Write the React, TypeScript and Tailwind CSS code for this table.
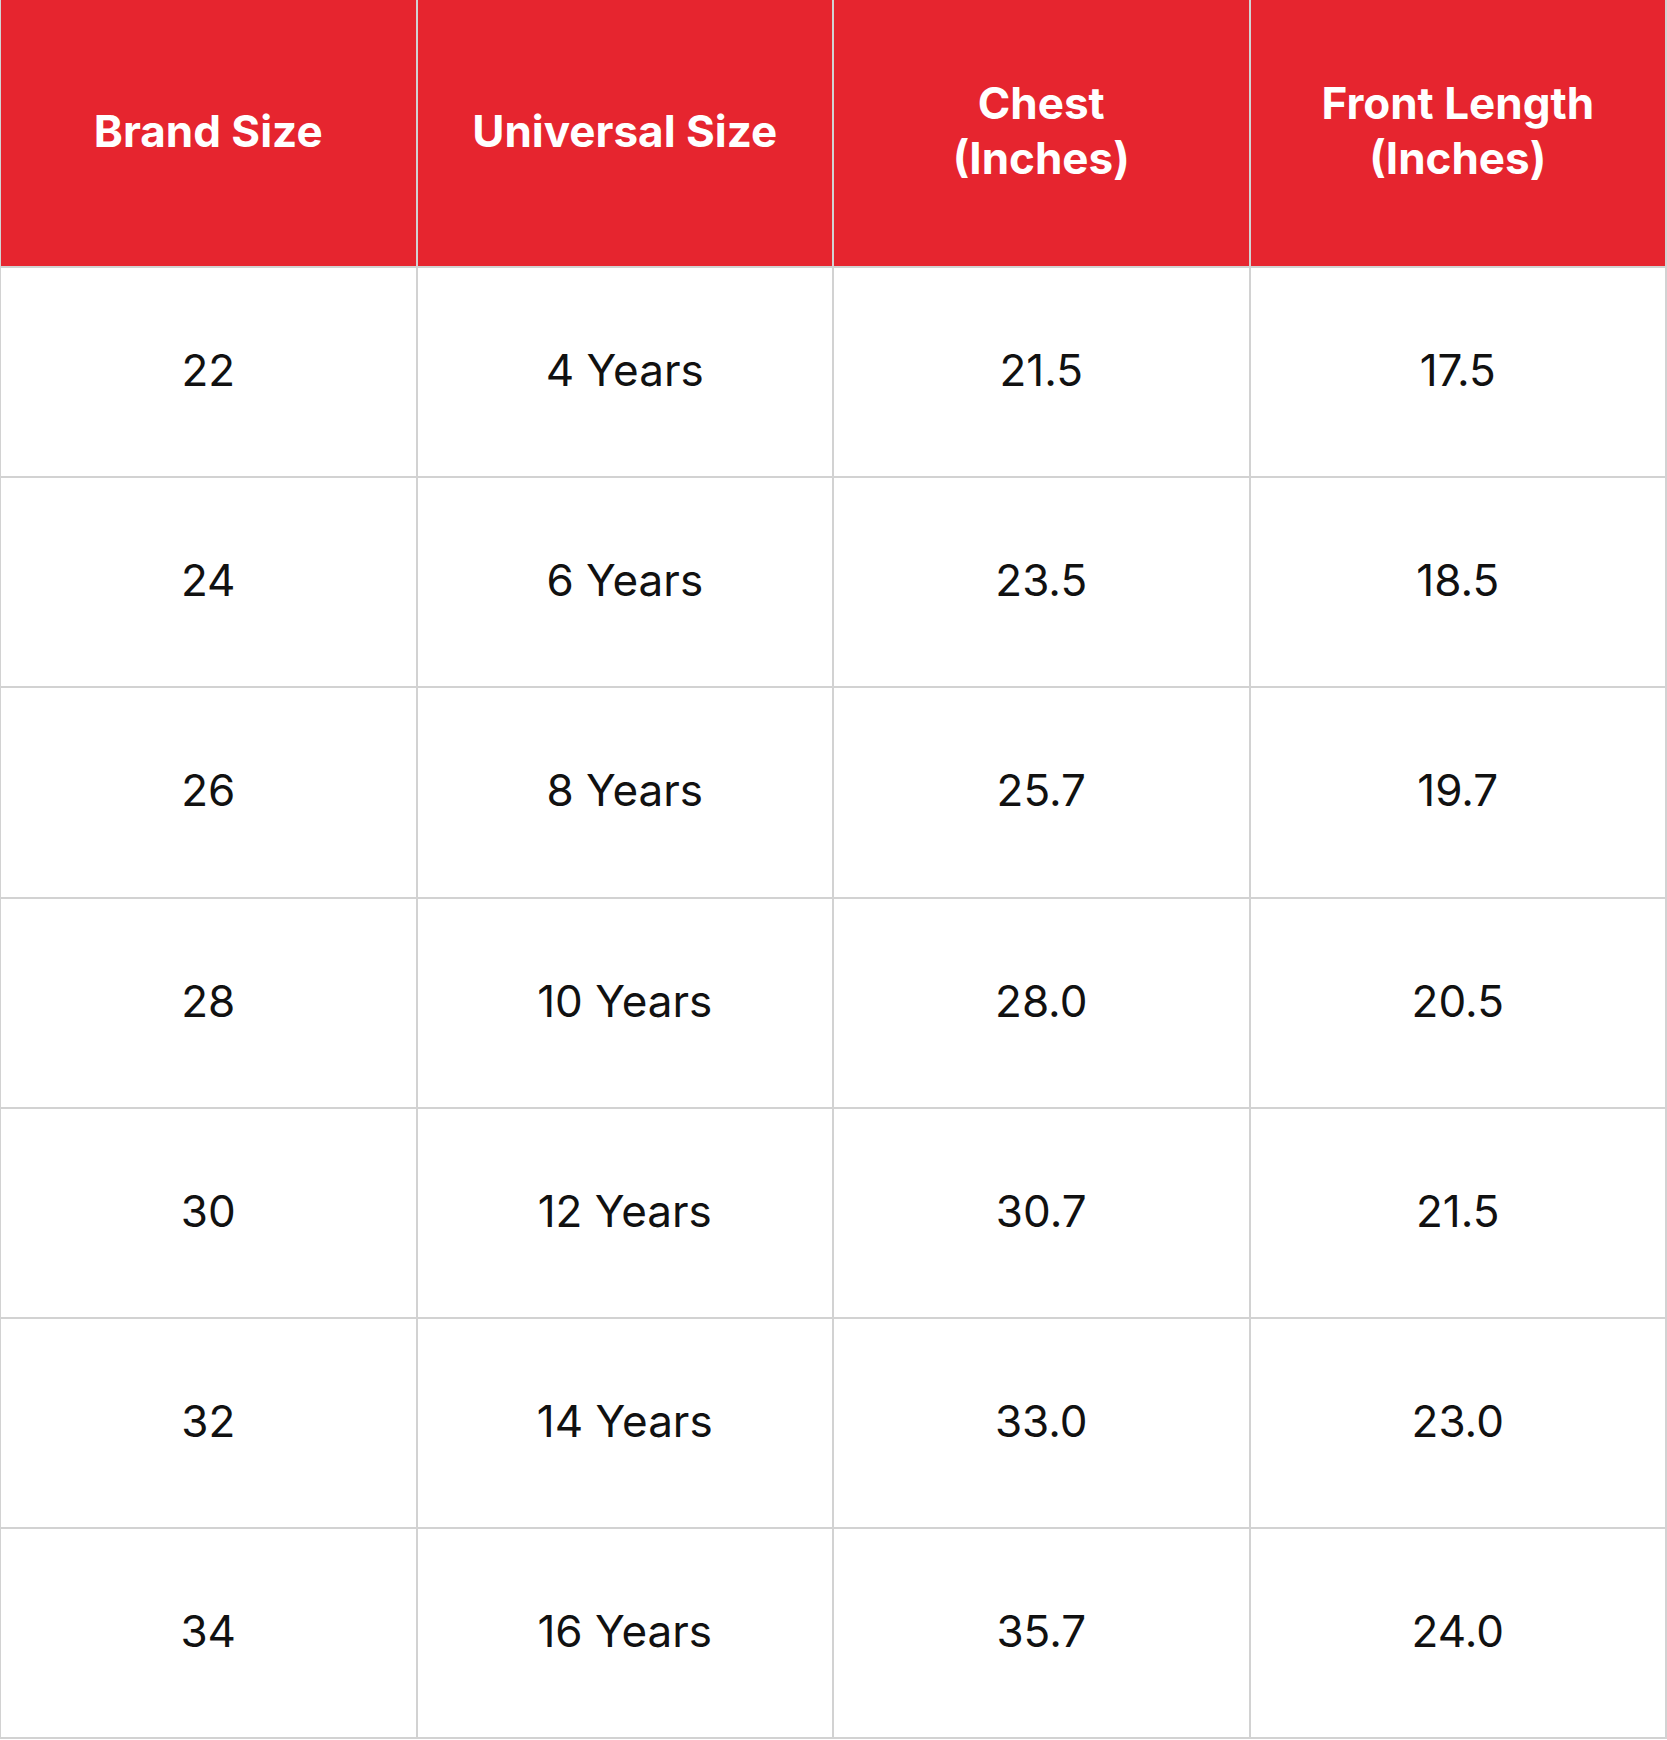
import React from "react";

const rows = [
  ["22", "4 Years", "21.5", "17.5"],
  ["24", "6 Years", "23.5", "18.5"],
  ["26", "8 Years", "25.7", "19.7"],
  ["28", "10 Years", "28.0", "20.5"],
  ["30", "12 Years", "30.7", "21.5"],
  ["32", "14 Years", "33.0", "23.0"],
  ["34", "16 Years", "35.7", "24.0"],
];

const headers = [
  ["Brand Size"],
  ["Universal Size"],
  ["Chest", "(Inches)"],
  ["Front Length", "(Inches)"],
];

export default function App() {
  return (
    <div className="w-[1667px] bg-white font-['Inter','Liberation_Sans',sans-serif]">
      <div className="grid grid-cols-4 gap-[2px] bg-[#d2d2d2] pl-[1px] pr-[2px] pb-[2px]">
        {headers.map((h, i) => (
          <div
            key={i}
            className="h-[266px] bg-[#e6252f] flex flex-col items-center justify-center pb-1 text-white text-[44px] leading-[55px] font-bold text-center"
          >
            {h.map((line) => (
              <span key={line}>{line}</span>
            ))}
          </div>
        ))}
        {rows.map((r, ri) =>
          r.map((cell, ci) => (
            <div
              key={ri + "-" + ci}
              className="h-[208.2px] bg-white flex items-center justify-center pb-1 text-[44px] text-[#111111] font-normal"
            >
              {cell}
            </div>
          ))
        )}
      </div>
    </div>
  );
}
